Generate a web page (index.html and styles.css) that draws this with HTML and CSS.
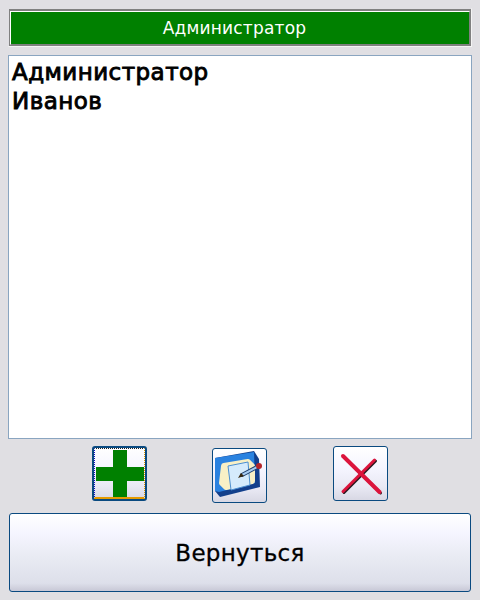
FILE: index.html
```html
<!DOCTYPE html>
<html lang="ru">
<head>
    <meta charset="UTF-8">
    <title>Администратор</title>
    <link rel="stylesheet" href="styles.css">
</head>
<body>
    <div class="title-frame">
        <div class="title">Администратор</div>
    </div>

    <ul class="list">
        <li>Администратор</li>
        <li>Иванов</li>
    </ul>

    <div class="tools">
        <button class="tool tool-add" aria-label="Добавить">
            <svg width="48" height="48" viewBox="0 0 48 48">
                <path fill="#008000" d="M17 0h14v17h17v14H31v17H17V31H0V17h17z"/>
            </svg>
        </button>
        <button class="tool tool-edit" aria-label="Изменить">
            <svg width="53" height="53" viewBox="0 0 53 53">
                <path fill="#123f8c" d="M2 9 41 2l5 8 1 28L7 48l-5-6z"/>
                <path fill="#2a82e0" d="M2 9 41 3l1 31L6 43l-4-1z"/>
                <path fill="#f8f0c6" stroke="#f8f0c6" stroke-width="6" stroke-linejoin="round" d="M11 17 35 13l4 4v15L13 38l-4-4z"/>
                <path fill="#d5ebfc" stroke="#4c8fd0" stroke-width="1" d="M15 17l20-4 2 23-19 5z"/>
                <path stroke="#1d3f6e" stroke-width="4" stroke-linecap="round" d="M29 26 44 18"/>
                <path stroke="#a8cdf2" stroke-width="2" stroke-linecap="round" d="M29 26 44 18"/>
                <path fill="#3a2a10" d="M25 29l3-5 3 3z"/>
                <circle cx="46" cy="17" r="3" fill="#b3262a"/>
            </svg>
        </button>
        <button class="tool tool-delete" aria-label="Удалить">
            <svg width="53" height="53" viewBox="0 0 53 53">
                <path fill="none" stroke="#2a1a20" stroke-width="3" stroke-linecap="round" d="M10 10 46.500 46M41.500 14 10 45.500"/>
                <path fill="none" stroke="#dc143c" stroke-width="4" stroke-linecap="round" d="M9 9 45.500 45"/>
                <path fill="none" stroke="#dc143c" stroke-width="3" stroke-linecap="round" d="M40.500 13 9 44.500"/>
            </svg>
        </button>
    </div>

    <button class="back">Вернуться</button>
</body>
</html>
```

FILE: styles.css
```css
html, body {
    height: 100%;
}
body {
    margin: 0;
    padding: 8px 8px 7px;
    box-sizing: border-box;
    display: flex;
    flex-direction: column;
    background-color: #e0dfe3;
    font-family: "DejaVu Sans", sans-serif;
    overflow: hidden;
}
button {
    padding: 0;
    font-family: inherit;
    cursor: pointer;
}

.title-frame {
    height: 39px;
    box-sizing: border-box;
    border: 1px solid #f4f4f4;
    border-left-color: #e0dfe3;
    border-top-color: #e0dfe3;
    background: #808080;
    padding: 2px 1px 1px 1px;
}
.title {
    height: 100%;
    box-sizing: border-box;
    padding-right: 11px;
    border: 1px solid #fff;
    border-right-color: #808080;
    border-bottom-color: #808080;
    background: #008000;
    color: #fff;
    font-size: 17px;
    letter-spacing: 0.2px;
    line-height: 33px;
    text-align: center;
}

.list {
    margin: 8px 0 0;
    padding: 2px 3px;
    height: 384px;
    box-sizing: border-box;
    border: 1px solid #8aa5c0;
    background: #fff;
    list-style: none;
    color: #000;
    font-size: 23px;
    letter-spacing: 0.45px;
    -webkit-text-stroke: 0.9px #000;
    line-height: 29px;
}

.tools {
    height: 56px;
    margin-top: 7px;
    padding-left: 84px;
    display: flex;
    align-items: flex-start;
    gap: 65px;
}
.tool {
    width: 55px;
    height: 55px;
    flex: none;
    box-sizing: border-box;
    display: flex;
    align-items: center;
    justify-content: center;
    border: 1px solid #0a4a80;
    border-radius: 3px;
    background: linear-gradient(#ffffff, #f5f5ff 40%, #e9e9f4 75%, #d8d8e4);
}
.tool-add {
    position: relative;
    border-width: 2px;
}
.tool-add::after {
    content: "";
    position: absolute;
    inset: 0;
    border: 1px dotted #1010c0;
    border-top-color: #222;
    border-right-color: #e59a00;
    border-bottom: 2px solid #e59a00;
}
.tool-edit {
    margin-top: 2px;
}
.tool-delete {
    margin-left: 1px;
}

.back {
    margin: 11px 1px 0;
    height: 79px;
    box-sizing: border-box;
    border: 1px solid #0a4a80;
    border-radius: 3px;
    background: linear-gradient(#ffffff, #f5f5ff 25%, #e9ebf3 55%, #dddfea 90%, #c8c8d6);
    color: #000;
    font-size: 23px;
    letter-spacing: 0.3px;
    -webkit-text-stroke: 0.3px #000;
}
```
